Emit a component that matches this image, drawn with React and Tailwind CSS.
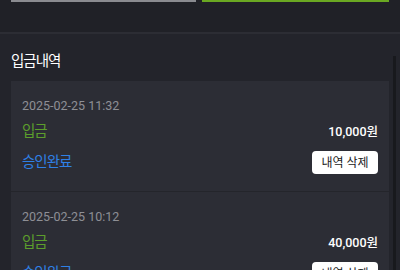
const items = [
  { date: "2025-02-25 11:32", type: "입금", amount: "10,000원", status: "승인완료" },
  { date: "2025-02-25 10:12", type: "입금", amount: "40,000원", status: "승인완료" },
];

function HistoryItem({ item, last }) {
  return (
    <div className={`px-[11px] pt-[16px] pb-[17px] ${last ? "" : "border-b border-[#24252b]"}`}>
      <div className="h-[17px] text-[12.5px] leading-[17px] text-[#8e8f95]">{item.date}</div>
      <div className="mt-[8px] flex h-[20px] items-center justify-between">
        <span className="text-[14.5px] tracking-[-1px] text-[#5c9e2c]">{item.type}</span>
        <span className="text-[12.5px] font-medium text-white">{item.amount}</span>
      </div>
      <div className="mt-[9px] flex h-[23px] items-center justify-between">
        <span className="text-[14.5px] tracking-[-1px] text-[#2f80e6]">{item.status}</span>
        <button className="h-[23px] w-[66px] rounded-[4px] bg-white text-[12px] text-[#222]">내역 삭제</button>
      </div>
    </div>
  );
}

export default function App() {
  return (
    <div
      className="h-[270px] w-[400px] overflow-hidden bg-[#23242b]"
      style={{ fontFamily: "Roboto, 'Noto Sans CJK KR', sans-serif" }}
    >
      <div className="h-[34px] border-b-2 border-[#2c2d34] bg-[#202127] px-[11px]">
        <div className="flex gap-[6px]">
          <div className="h-[2px] w-[185px] bg-[#8a8b90]" />
          <div className="h-[2px] flex-1 bg-[#6aa822]" />
        </div>
      </div>
      <div className="relative px-[11px]">
        <div className="absolute right-[4px] top-[22px] h-[300px] w-[3px] bg-[#18191d]" />
        <h2 className="flex h-[47px] items-center pt-[9px] text-[14.5px] tracking-[-1px] text-white">입금내역</h2>
        <div className="bg-[#2c2d35]">
          {items.map((item, i) => (
            <HistoryItem key={i} item={item} last={i === items.length - 1} />
          ))}
        </div>
      </div>
    </div>
  );
}
